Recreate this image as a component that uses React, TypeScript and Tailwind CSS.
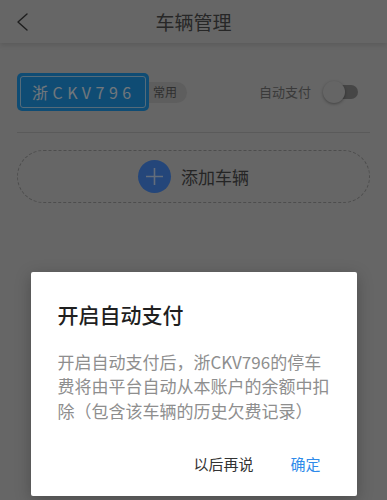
import { useState } from "react";

const FONT = "font-['Noto_Sans_CJK_SC','Noto_Sans',sans-serif]";

function Header() {
  return (
    <header className="relative z-10 grid h-[43px] grid-cols-[48px_1fr_48px] items-center bg-[#cccccc] shadow-[0_2px_5px_rgba(0,0,0,0.12)]">
      <button className="flex h-full items-center pl-[16px]">
        <svg width="12" height="18" viewBox="0 0 12 18" fill="none">
          <polyline
            points="11,1 2,9 11,17"
            stroke="#3c3c3c"
            strokeWidth="1.4"
            strokeLinejoin="round"
            strokeLinecap="round"
          />
        </svg>
      </button>
      <h1 className="text-center text-[19px] leading-none text-[#4e4e4e]">
        车辆管理
      </h1>
      <span />
    </header>
  );
}

function Plate({ number }: { number: string }) {
  return (
    <div className="flex items-center">
      <div className="h-[38px] w-[132px] rounded-[5px] bg-[#1e98e8] p-[3px]">
        <div className="flex h-full items-center rounded-[3px] border border-[#a9d6f5] pl-[11px] text-[16px] tracking-[4.5px] text-[#e2eef7]">
          {number}
        </div>
      </div>
      <span className="flex h-[21px] items-center rounded-r-full bg-[#bcbcbc] pl-[4px] pr-[10px] text-[12px] text-[#5e5e5e]">
        常用
      </span>
    </div>
  );
}

function Toggle({ on }: { on: boolean }) {
  return (
    <div className="relative h-[22px] w-[35px]">
      <span
        className={`absolute right-0 top-[4px] h-[14px] w-[30px] rounded-full ${on ? "bg-[#8ab6e8]" : "bg-[#8c8c8c]"}`}
      />
      <span
        className={`absolute top-0 h-[22px] w-[22px] rounded-full bg-[#cbcbcb] shadow-[0_1px_3px_rgba(0,0,0,0.35)] ${on ? "right-0" : "left-0"}`}
      />
    </div>
  );
}

function AutoPayDialog({
  plate,
  onCancel,
  onConfirm,
}: {
  plate: string;
  onCancel: () => void;
  onConfirm: () => void;
}) {
  return (
    <div className="absolute inset-x-0 top-0 z-20 flex h-[768px] items-center justify-center bg-black/50">
      <div className="w-[326px] rounded-[2px] bg-white pb-[21px] pt-[27px] shadow-[0_4px_16px_rgba(0,0,0,0.25)]">
        <h2 className="px-[27px] text-[21px] leading-[30px] font-medium text-[#1f1f1f]">
          开启自动支付
        </h2>
        <p className="mt-[21px] px-[27px] text-[17px] leading-[24.5px] text-[#8e8e8e]">
          <span className="block whitespace-nowrap">
            开启自动支付后，{plate}的停车
          </span>
          <span className="block whitespace-nowrap">
            费将由平台自动从本账户的余额中扣
          </span>
          <span className="block whitespace-nowrap">
            除（包含该车辆的历史欠费记录）
          </span>
        </p>
        <div className="mt-[30px] flex justify-end gap-[37px] pr-[36px] text-[15px] leading-[22px]">
          <button onClick={onCancel} className="text-[#333333]">
            以后再说
          </button>
          <button onClick={onConfirm} className="text-[#2f8bea]">
            确定
          </button>
        </div>
      </div>
    </div>
  );
}

export default function App() {
  const plate = "浙CKV796";
  const [autoPay, setAutoPay] = useState(false);
  const [showDialog, setShowDialog] = useState(true);

  return (
    <div
      className={`relative h-[500px] w-full overflow-hidden bg-[#cccccc] ${FONT}`}
    >
      <Header />

      <main className="px-[17px]">
        <div className="mt-[29px] flex h-[40px] items-center justify-between">
          <Plate number={plate} />
          <div className="mr-[12px] flex items-center gap-[12px]">
            <span className="text-[13px] text-[#747474]">自动支付</span>
            <button onClick={() => setShowDialog(true)}>
              <Toggle on={autoPay} />
            </button>
          </div>
        </div>

        <div className="mt-[20px] h-px bg-[#b5b5b5]" />

        <button className="mt-[17px] flex h-[53px] w-full items-center justify-center gap-[10px] rounded-full border border-dashed border-[#9a9a9a]">
          <span className="flex h-[33px] w-[33px] items-center justify-center rounded-full bg-[#488cf4]">
            <svg width="19" height="19" viewBox="0 0 19 19">
              <path
                d="M9.5 1v17M1 9.5h17"
                stroke="#f2f4f8"
                strokeOpacity="0.75"
                strokeWidth="1.6"
              />
            </svg>
          </span>
          <span className="text-[17px] text-[#4a4a4a]">添加车辆</span>
        </button>
      </main>

      {showDialog && (
        <AutoPayDialog
          plate={plate}
          onCancel={() => setShowDialog(false)}
          onConfirm={() => {
            setAutoPay(true);
            setShowDialog(false);
          }}
        />
      )}
    </div>
  );
}
